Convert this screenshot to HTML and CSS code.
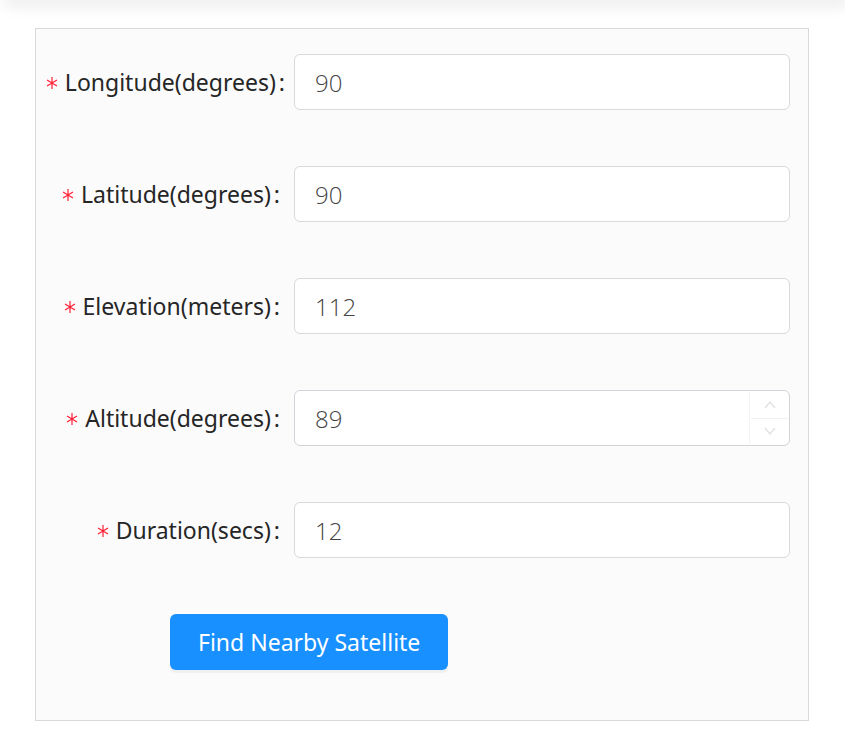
FILE: index.html
```html
<!DOCTYPE html>
<html lang="en">
<head>
<meta charset="utf-8">
<title>Satellite search</title>
<link rel="stylesheet" href="styles.css">
</head>
<body>
<header class="topbar"></header>
<form class="panel">
  <div class="row"><label class="label label-wide" for="longitude"><svg class="star" viewBox="0 0 12 14" aria-hidden="true"><path d="M6 1v12M1 4l10 6M11 4L1 10"/></svg>Longitude(degrees)<span class="colon">:</span></label><div class="field"><input id="longitude" type="text" value="90"></div></div>
  <div class="row"><label class="label" for="latitude"><svg class="star" viewBox="0 0 12 14" aria-hidden="true"><path d="M6 1v12M1 4l10 6M11 4L1 10"/></svg>Latitude(degrees)<span class="colon">:</span></label><div class="field"><input id="latitude" type="text" value="90"></div></div>
  <div class="row"><label class="label" for="elevation"><svg class="star" viewBox="0 0 12 14" aria-hidden="true"><path d="M6 1v12M1 4l10 6M11 4L1 10"/></svg>Elevation(meters)<span class="colon">:</span></label><div class="field"><input id="elevation" type="text" value="112"></div></div>
  <div class="row"><label class="label" for="altitude"><svg class="star" viewBox="0 0 12 14" aria-hidden="true"><path d="M6 1v12M1 4l10 6M11 4L1 10"/></svg>Altitude(degrees)<span class="colon">:</span></label><div class="field"><input id="altitude" class="active" type="text" value="89"><div class="stepper"><button type="button" aria-label="Increase"><svg viewBox="0 0 12 8"><path d="M1 7l5-6 5 6"/></svg></button><button type="button" aria-label="Decrease"><svg viewBox="0 0 12 8"><path d="M1 1l5 6 5-6"/></svg></button></div></div></div>
  <div class="row"><label class="label" for="duration"><svg class="star" viewBox="0 0 12 14" aria-hidden="true"><path d="M6 1v12M1 4l10 6M11 4L1 10"/></svg>Duration(secs)<span class="colon">:</span></label><div class="field"><input id="duration" type="text" value="12"></div></div>
  <button class="submit" type="submit">Find Nearby Satellite</button>
</form>
</body>
</html>
```
FILE: styles.css
```css
* { box-sizing: border-box; }
body { margin: 0; background: #fff; color: #262626; font: 23px/32px "Noto Sans", "Open Sans", sans-serif; }
.topbar { height: 0; margin-left: 8px; box-shadow: 0 0 16px 4px #dedede; }
.panel { margin: 28px 36px 15px 35px; padding: 25px 18px 50px 8px; background: #fbfbfb; border: 1px solid #d9d9d9; }
.row { display: flex; align-items: center; margin-bottom: 56px; }
.label { display: flex; flex: 0 0 250px; align-items: center; justify-content: flex-end; padding-right: 14px; white-space: nowrap; }
.label-wide { padding-right: 9px; }
.star { flex: none; width: 12px; height: 14px; margin: 1px 7px 0 0; fill: none; stroke: #ff1f35; stroke-width: 1.2; }
.colon { margin-left: 3px; }
.field { position: relative; flex: 1; min-width: 0; }
input { display: block; width: 100%; height: 56px; padding: 0 20px; border: 1px solid #d9d9d9; border-radius: 6px; background: #fff; color: #444; font: 300 24px/32px "Open Sans", "Noto Sans", sans-serif; }
.active { border-color: #d0d4d9; }
.stepper { position: absolute; top: 2px; right: 2px; bottom: 2px; display: flex; flex-direction: column; width: 39px; padding-left: 1px; border-left: 1px solid #f4f4f4; }
.stepper button { display: flex; flex: 1; align-items: center; justify-content: center; padding: 2px 0; border: 0; background: none; }
.stepper button + button { border-top: 1px solid #f0f0f0; }
.stepper svg { width: 12px; height: 8px; fill: none; stroke: #e0e0e0; stroke-width: 1.2; }
.submit { display: block; height: 56px; margin-left: 126px; padding: 0 28px; border: 0; border-radius: 6px; background: #1890ff; box-shadow: 0 3px 1px #f0f0f0; color: #fff; font: inherit; }
```
